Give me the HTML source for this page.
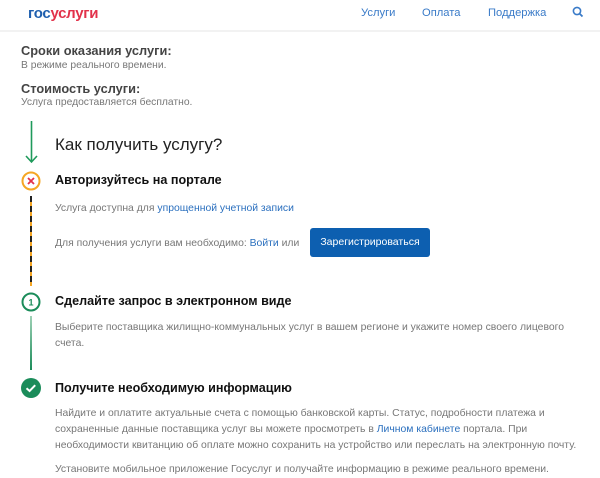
<!DOCTYPE html>
<html><head><meta charset="utf-8"><style>
body{margin:0;width:600px;height:475px;overflow:hidden;background:#fff;font-family:"Liberation Sans",Arial,sans-serif;position:relative}
.a{position:absolute;white-space:nowrap}
.h{font-weight:bold;font-size:12.8px;color:#444}
.s{font-size:10.3px;color:#777}
.t{font-weight:bold;font-size:12.6px;color:#111}
.p{font-size:10.4px;color:#777;line-height:16px}
.l{color:#2a6fbe}
.nav{font-size:11.2px;color:#3a7bc8}
</style></head><body>
<div class="a" style="left:0;top:0;width:600px;height:30px;border-bottom:2px solid #f2f2f2"></div>
<div class="a" style="left:28px;top:5px;font-size:15px;font-weight:bold;letter-spacing:-0.3px"><span style="color:#1f5fae">гос</span><span style="color:#e2314a">услуги</span></div>
<div class="a nav" style="left:361px;top:7px">Услуги</div>
<div class="a nav" style="left:422px;top:7px">Оплата</div>
<div class="a nav" style="left:488px;top:7px">Поддержка</div>
<svg class="a" style="left:572px;top:6px" width="12" height="12" viewBox="0 0 12 12"><circle cx="5" cy="5" r="3.6" fill="none" stroke="#3a7bc8" stroke-width="1.6"/><path d="M7.7 7.7L10.5 10.5" stroke="#3a7bc8" stroke-width="1.8"/></svg>

<div class="a h" style="left:21px;top:43px">Сроки оказания услуги:</div>
<div class="a s" style="left:21px;top:60px">В режиме реального времени.</div>
<div class="a h" style="left:21px;top:81px">Стоимость услуги:</div>
<div class="a s" style="left:21px;top:97px">Услуга предоставляется бесплатно.</div>

<svg class="a" style="left:22px;top:120px" width="20" height="46"><path d="M9.5 1V42M4 36L9.5 42L15 36" fill="none" stroke="#1f9a5b" stroke-width="1.6"/></svg>
<div class="a" style="left:55px;top:135px;font-size:17px;color:#222">Как получить услугу?</div>

<svg class="a" style="left:20px;top:170px" width="22" height="22"><circle cx="11" cy="11" r="8.5" fill="#fff" stroke="#f5a623" stroke-width="2"/><path d="M8 8L14 14M14 8L8 14" stroke="#e2314a" stroke-width="1.8"/></svg>
<div class="a t" style="left:55px;top:173px">Авторизуйтесь на портале</div>
<div class="a" style="left:30px;top:196px;width:2px;height:90px;background:repeating-linear-gradient(#222 0 6px,#f5a623 6px 10px)"></div>
<div class="a p" style="left:55px;top:201px">Услуга доступна для <span class="l">упрощенной учетной записи</span></div>
<div class="a p" style="left:55px;top:236px">Для получения услуги вам необходимо: <span class="l">Войти</span> или</div>
<div class="a" style="left:310px;top:228px;width:120px;height:29px;background:#0d5fb0;border-radius:3px;color:#fff;font-size:10.5px;line-height:29px;text-align:center">Зарегистрироваться</div>

<svg class="a" style="left:20px;top:291px" width="22" height="22"><circle cx="11" cy="11" r="8.5" fill="#fff" stroke="#1b8c5a" stroke-width="2"/><text x="11" y="14.5" font-size="9" font-weight="bold" text-anchor="middle" fill="#1b8c5a" font-family="Liberation Sans">1</text></svg>
<div class="a t" style="left:55px;top:294px">Сделайте запрос в электронном виде</div>
<div class="a" style="left:30px;top:316px;width:2px;height:54px;background:linear-gradient(#9fd1b6,#1b8c5a)"></div>
<div class="a p" style="left:55px;top:320px">Выберите поставщика жилищно-коммунальных услуг в вашем регионе и укажите номер своего лицевого<br>счета.</div>

<svg class="a" style="left:20px;top:377px" width="22" height="22"><circle cx="11" cy="11" r="10" fill="#1b8c5a"/><path d="M6.5 11.2L9.6 14L15.2 8.2" fill="none" stroke="#fff" stroke-width="2"/></svg>
<div class="a t" style="left:55px;top:381px">Получите необходимую информацию</div>
<div class="a p" style="left:55px;top:406px">Найдите и оплатите актуальные счета с помощью банковской карты. Статус, подробности платежа и<br>сохраненные данные поставщика услуг вы можете просмотреть в <span class="l">Личном кабинете</span> портала. При<br>необходимости квитанцию об оплате можно сохранить на устройство или переслать на электронную почту.</div>
<div class="a p" style="left:55px;top:462px">Установите мобильное приложение Госуслуг и получайте информацию в режиме реального времени.</div>
</body></html>
